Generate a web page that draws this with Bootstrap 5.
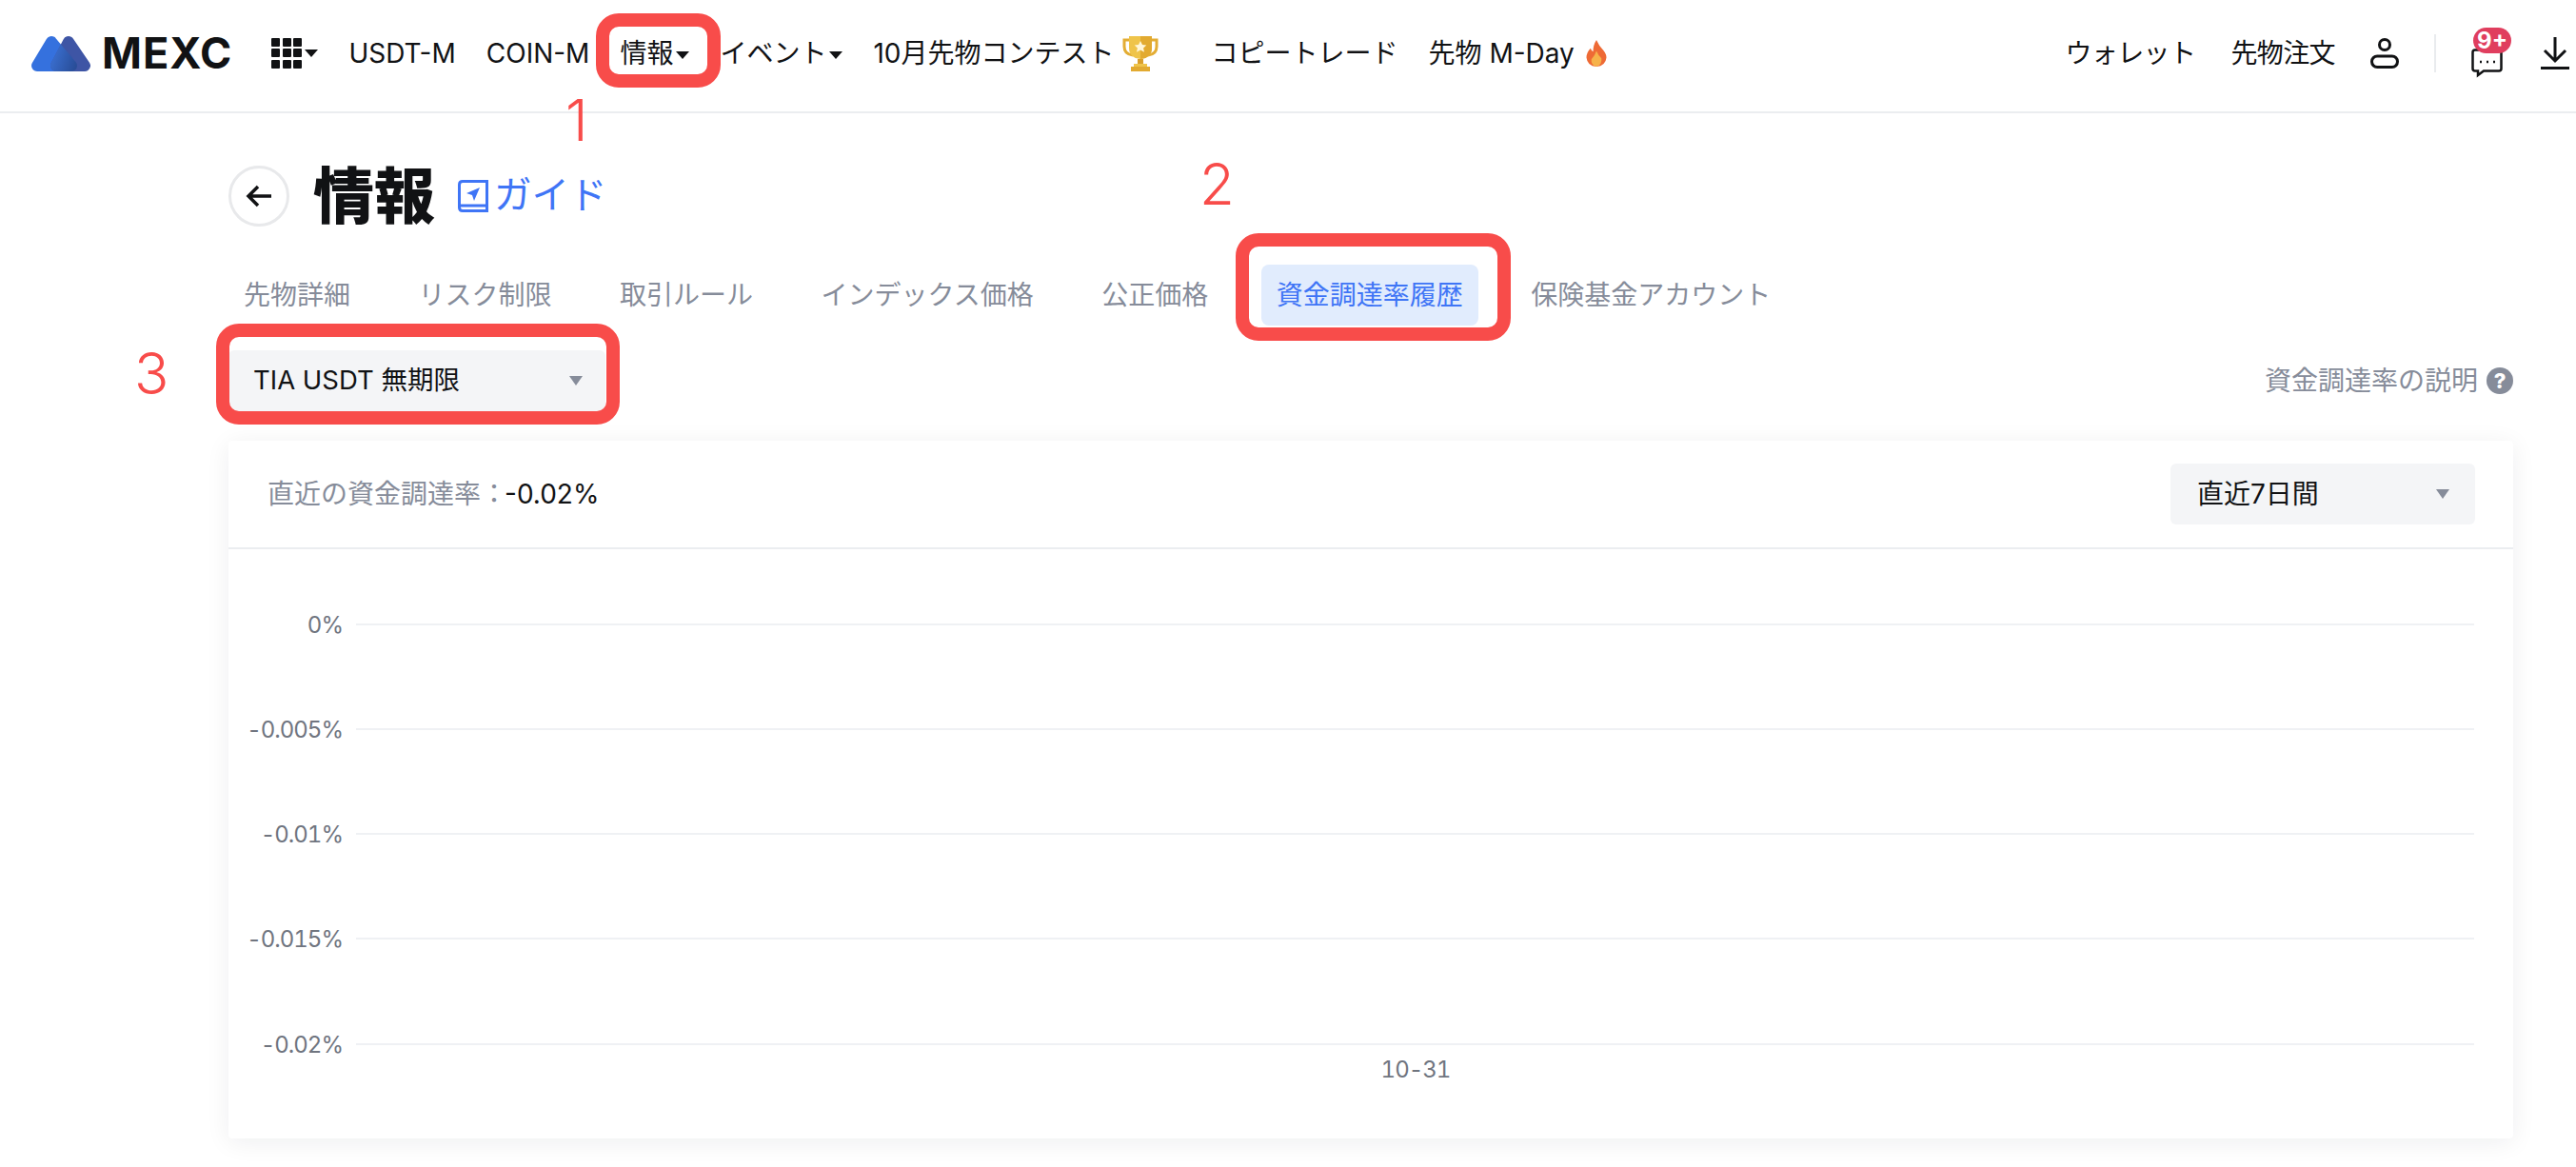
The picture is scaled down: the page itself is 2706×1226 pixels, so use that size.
<!DOCTYPE html>
<html lang="ja">
<head>
  <meta charset="UTF-8" />
  <title>情報 - 資金調達率履歴</title>
  <link rel="stylesheet" href="https://cdn.jsdelivr.net/npm/bootstrap@5.3.3/dist/css/bootstrap.min.css" />
  <style>
    body { font-family: Inter, "Noto Sans CJK JP", sans-serif; font-size: 28px; color: #111214; background: #fff; width: 2706px; height: 1226px; overflow: hidden; position: relative; }

    /* top bar */
    .top-bar { height: 119px; border-bottom: 2px solid #ebedf0; padding: 0 7px 6px 33px; flex-wrap: nowrap; }
    .top-bar .nav-link { padding: 0; color: #111214; font-size: 28px; white-space: nowrap; }
    .brand-text { font-size: 45px; font-weight: 700; letter-spacing: 1px; color: #111214; line-height: 1; margin-left: 12px; }
    .left-nav { gap: 32px; margin-left: 41px; }
    .right-nav { gap: 37px; }
    .right-nav .nav-link { letter-spacing: -.6px; }
    .caret-link::after { display: inline-block; content: ""; border-top: 8px solid #111214; border-left: 7px solid transparent; border-right: 7px solid transparent; margin-left: 3px; vertical-align: 4px; }
    .grid-icon { display: grid; grid-template-columns: repeat(3, 9px); grid-auto-rows: 9px; gap: 2.5px; }
    .grid-icon span { background: #111214; border-radius: 1px; }
    .v-sep { width: 2px; height: 40px; background: #e9ebee; }
    .msg-wrap { position: relative; width: 33px; height: 28px; margin-top: 4px; margin-right: 3px; }
    .msg-badge { position: absolute; left: 2px; top: -15px; width: 40px; height: 27px; border-radius: 14px; background: #e03e5e; color: #fff; font-size: 24px; font-weight: 700; line-height: 27px; text-align: center; }

    /* page */
    .page-wrap { width: 2400px; margin-left: 240px; }
    .title-row { margin-top: 55px; height: 64px; }
    .back-btn { width: 64px; height: 64px; border: 3px solid #e8e9eb; border-radius: 50%; background: #fff; padding: 0; }
    .page-title { font-size: 64px; font-weight: 900; line-height: 64px; margin: 0 24px 0 25px; }
    .guide-link { color: #3f75f6; font-size: 39.5px; text-decoration: none; line-height: 1; gap: 6px; }

    .info-tabs { margin-top: 40px; gap: 39.5px; }
    .info-tabs .nav-link { color: #868c9a; font-size: 28px; height: 64px; line-height: 64px; padding: 0 16px; border-radius: 8px; white-space: nowrap; }
    .info-tabs .nav-link.active { color: #3f75f6; background: #e1ecfd; }

    .filter-row { margin-top: 26px; height: 64px; }
    .soft-select { background: #f4f5f7; border: 0; border-radius: 6px; height: 64px; font-size: 28px; color: #111214; padding: 0 24px 0 26px; }
    .soft-select:hover, .soft-select:active { background: #f4f5f7; color: #111214; }
    .soft-select::after { content: ""; border-top: 10px solid #868c9a; border-left: 7px solid transparent; border-right: 7px solid transparent; }
    .market-select { width: 396px; font-size: 27.500px; }
    .range-select { width: 320px; padding: 0 27px 0 28px; }
    .help-text { color: #868c9a; font-size: 28px; gap: 9px; }
    .help-dot { width: 28px; height: 28px; border-radius: 50%; background: #868c9a; color: #fff; font-size: 22px; font-weight: 800; line-height: 28px; text-align: center; }

    .rate-card { margin-top: 31px; height: 733px; border: 0; border-radius: 4px; box-shadow: 0 4px 26px rgba(20, 25, 40, .07); }
    .rate-card .card-header { background: #fff; height: 114px; padding: 24px 40px 24px 41px; border-bottom: 2px solid #ebedf0; }
    .rate-label { color: #868c9a; font-size: 28px; }
    .rate-value { color: #111214; font-size: 28px; margin-left: -3px; }
    .rate-card .card-body { padding: 0; }
    .chart-svg { display: block; }
    .chart-svg line { stroke: #eff1f4; stroke-width: 2; }
    .chart-svg text { font-family: Inter, sans-serif; font-size: 24px; fill: #70757f; font-variant-numeric: tabular-nums; letter-spacing: -1px; }

    /* red annotations laid over the screenshot */
    .note-box { position: absolute; border: 14px solid #f84c4a; border-radius: 24px; pointer-events: none; }
    .note-one { left: 626px; top: 14px; width: 131px; height: 78px; }
    .note-two { left: 1298px; top: 245px; width: 289px; height: 113px; }
    .note-three { left: 227px; top: 340px; width: 424px; height: 106px; }
    .note-num { position: absolute; color: #f84c4a; font-size: 60px; font-weight: 300; line-height: 1; }
    .num-one { left: 594px; top: 96px; }
    .num-two { left: 1260px; top: 163px; }
    .num-three { left: 141px; top: 362px; }
  </style>
</head>
<body>

  <header class="top-bar d-flex align-items-center justify-content-between">
    <div class="d-flex align-items-center">
      <a class="d-flex align-items-center text-decoration-none" href="#">
        <svg width="62" height="38" viewBox="0 0 62 38">
          <defs>
            <linearGradient id="overlapGrad" x1="0" y1="0" x2="1" y2="0.3">
              <stop offset="0" stop-color="#3a6fd0" />
              <stop offset="1" stop-color="#274a93" />
            </linearGradient>
            <mask id="leftPeak" maskUnits="userSpaceOnUse" x="0" y="0" width="62" height="38">
              <path d="M6 32 L21 7 L42 32 Z" fill="#fff" stroke="#fff" stroke-width="12" stroke-linejoin="round" />
            </mask>
          </defs>
          <path d="M6 32 L21 7 L42 32 Z" fill="#3571de" stroke="#3571de" stroke-width="12" stroke-linejoin="round" />
          <path d="M26 32 L39 7 L56 32 Z" fill="#3e55a5" stroke="#3e55a5" stroke-width="12" stroke-linejoin="round" />
          <path d="M26 32 L39 7 L56 32 Z" fill="url(#overlapGrad)" stroke="url(#overlapGrad)" stroke-width="12" stroke-linejoin="round" mask="url(#leftPeak)" />
        </svg>
        <span class="brand-text">MEXC</span>
      </a>
      <nav class="nav left-nav align-items-center flex-nowrap">
        <a class="nav-link caret-link d-flex align-items-center" href="#">
          <span class="grid-icon"><span></span><span></span><span></span><span></span><span></span><span></span><span></span><span></span><span></span></span>
        </a>
        <a class="nav-link" href="#">USDT-M</a>
        <a class="nav-link" href="#">COIN-M</a>
        <a class="nav-link caret-link" href="#">情報</a>
        <a class="nav-link caret-link" href="#">イベント</a>
        <a class="nav-link d-flex align-items-center gap-2" href="#">10月先物コンテスト
          <svg width="38" height="38" viewBox="0 0 38 38">
            <path d="M8 5 H2 V12 Q2 20 11 21 M30 5 H36 V12 Q36 20 27 21" fill="none" stroke="#e3ad35" stroke-width="3" />
            <path d="M7 1 H31 V13 Q31 24 19 25 Q7 24 7 13 Z" fill="#efc44a" />
            <path d="M19 1 H31 V13 Q31 24 19 25 Z" fill="#e2aa30" />
            <path d="M19 6 l2 4 4.3 .5 -3.2 3 .9 4.300 -4 -2.200 -4 2.200 .9 -4.300 -3.200 -3 4.300 -.5 z" fill="#fff6d8" />
            <rect x="16" y="25" width="6" height="6" fill="#d99f2b" />
            <rect x="12" y="30" width="14" height="3" fill="#efc44a" />
            <rect x="9" y="33" width="20" height="5" fill="#e2aa30" />
          </svg>
        </a>
        <a class="nav-link ms-4" href="#">コピートレード</a>
        <a class="nav-link d-flex align-items-center gap-2" href="#">先物 M-Day
          <svg class="ms-1" width="22" height="28" viewBox="0 0 24 32">
            <path d="M12 0 Q15 7 20 12 Q24 17 24 21 Q23 31 12 32 Q1 31 0 21 Q0 15 5 10 Q6 13 8 14 Q8 6 12 0 Z" fill="#ee6a35" />
            <path d="M12 13 Q14 18 18 22 Q19 30 12 32 Q5 30 6 23 Q10 19 12 13 Z" fill="#f6b24a" />
          </svg>
        </a>
      </nav>
    </div>
    <div class="d-flex align-items-center right-nav">
      <a class="nav-link" href="#">ウォレット</a>
      <a class="nav-link" href="#">先物注文</a>
      <svg width="30" height="32" viewBox="0 0 30 32" fill="none" stroke="#111214" stroke-width="3">
        <circle cx="15" cy="7" r="5.500" />
        <rect x="1.500" y="19" width="27" height="11.500" rx="5.700" />
      </svg>
      <span class="v-sep"></span>
      <span class="msg-wrap">
        <svg width="33" height="32" viewBox="0 0 33 32" fill="none" stroke="#111214" stroke-width="2.500">
          <path d="M4 1.500 H29 Q31.500 1.500 31.500 4 V21 Q31.500 23.500 29 23.500 H13 L7 28 V23.500 H4 Q1.500 23.500 1.500 21 V4 Q1.500 1.500 4 1.500 Z" />
          <path d="M9 14 H11 M16 14 H18 M23 14 H25" />
        </svg>
        <span class="msg-badge">9+</span>
      </span>
      <svg width="30" height="34" viewBox="0 0 30 34" fill="none" stroke="#111214" stroke-width="3">
        <path d="M15 0 V25 M4 14 L15 25 L26 14" />
        <path d="M0 32.500 H30" />
      </svg>
    </div>
  </header>

  <main class="page-wrap">
    <div class="title-row d-flex align-items-center">
      <button class="back-btn d-flex align-items-center justify-content-center" type="button" aria-label="back">
        <svg width="28" height="24" viewBox="0 0 28 24" fill="none" stroke="#111214" stroke-width="3.500">
          <path d="M27 12 H3 M13 2 L3 12 L13 22" />
        </svg>
      </button>
      <h1 class="page-title">情報</h1>
      <a class="guide-link d-flex align-items-center" href="#">
        <svg width="32" height="34" viewBox="0 0 32 34" fill="none" stroke="#3f75f6" stroke-width="3">
          <path d="M5 1.500 H30.500 V32.500 H5 Q1.500 32.500 1.500 29 V5 Q1.500 1.500 5 1.500 Z" />
          <path d="M2 27 H30" />
          <path d="M23 8 L9 14 L15 16 L17 22 Z" fill="#3f75f6" stroke="none" />
        </svg>
        ガイド
      </a>
    </div>

    <nav class="nav info-tabs flex-nowrap">
      <a class="nav-link" href="#">先物詳細</a>
      <a class="nav-link" href="#">リスク制限</a>
      <a class="nav-link" href="#">取引ルール</a>
      <a class="nav-link" href="#">インデックス価格</a>
      <a class="nav-link" href="#">公正価格</a>
      <a class="nav-link active" href="#">資金調達率履歴</a>
      <a class="nav-link" href="#">保険基金アカウント</a>
    </nav>

    <div class="filter-row d-flex align-items-center justify-content-between">
      <button class="btn soft-select market-select d-flex align-items-center justify-content-between" type="button">TIA USDT 無期限</button>
      <a class="help-text d-flex align-items-center text-decoration-none" href="#">資金調達率の説明 <span class="help-dot">?</span></a>
    </div>

    <div class="card rate-card">
      <div class="card-header d-flex align-items-center justify-content-between">
        <div><span class="rate-label">直近の資金調達率：</span><span class="rate-value">-0.02%</span></div>
        <button class="btn soft-select range-select d-flex align-items-center justify-content-between" type="button">直近7日間</button>
      </div>
      <div class="card-body">
        <svg class="chart-svg" width="2400" height="619" viewBox="0 0 2400 619">
          <line x1="134" x2="2359" y1="79" y2="79" />
          <line x1="134" x2="2359" y1="189" y2="189" />
          <line x1="134" x2="2359" y1="299" y2="299" />
          <line x1="134" x2="2359" y1="409" y2="409" />
          <line x1="134" x2="2359" y1="520" y2="520" />
          <text x="120" y="88" text-anchor="end">0%</text>
          <text x="120" y="198" text-anchor="end">-0.005%</text>
          <text x="120" y="308" text-anchor="end">-0.01%</text>
          <text x="120" y="418" text-anchor="end">-0.015%</text>
          <text x="120" y="529" text-anchor="end">-0.02%</text>
          <text x="1247" y="555" text-anchor="middle">10-31</text>
        </svg>
      </div>
    </div>
  </main>

  <div class="note-box note-one"></div>
  <div class="note-box note-two"></div>
  <div class="note-box note-three"></div>
  <span class="note-num num-one">1</span>
  <span class="note-num num-two">2</span>
  <span class="note-num num-three">3</span>

  <script src="https://cdn.jsdelivr.net/npm/bootstrap@5.3.3/dist/js/bootstrap.bundle.min.js"></script>
</body>
</html>
